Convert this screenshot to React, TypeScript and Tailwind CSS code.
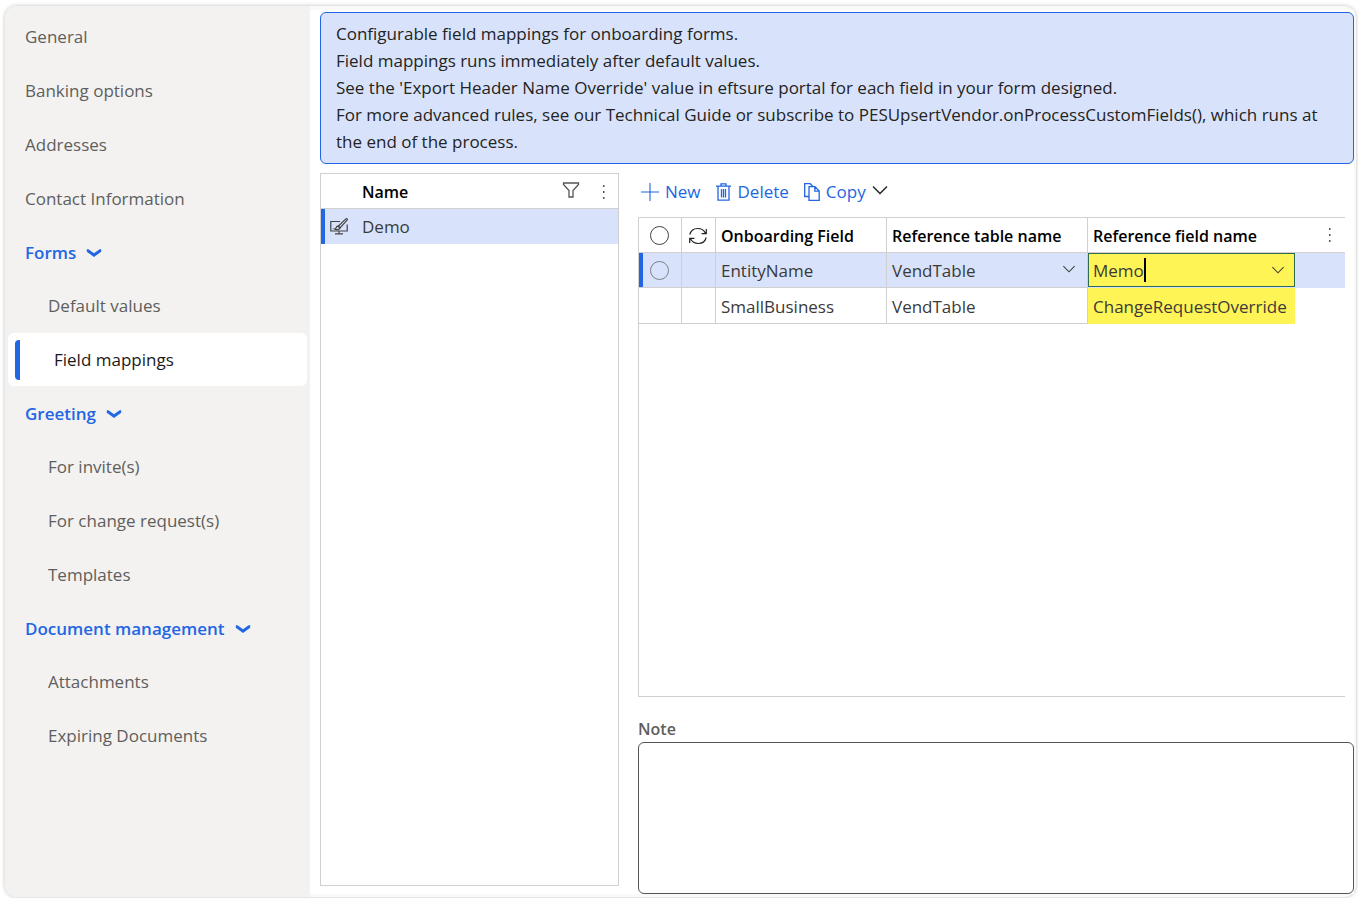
import { useState } from "react";
import clsx from "clsx";

interface NavGroup {
  label: string;
  items?: string[];
}

interface MappingRow {
  field: string;
  table: string;
  reference: string;
}

const NAV: NavGroup[] = [
  { label: "General" },
  { label: "Banking options" },
  { label: "Addresses" },
  { label: "Contact Information" },
  { label: "Forms", items: ["Default values", "Field mappings"] },
  {
    label: "Greeting",
    items: ["For invite(s)", "For change request(s)", "Templates"],
  },
  {
    label: "Document management",
    items: ["Attachments", "Expiring Documents"],
  },
];

const INFO_LINES = [
  "Configurable field mappings for onboarding forms.",
  "Field mappings runs immediately after default values.",
  "See the 'Export Header Name Override' value in eftsure portal for each field in your form designed.",
  "For more advanced rules, see our Technical Guide or subscribe to PESUpsertVendor.onProcessCustomFields(), which runs at the end of the process.",
];

const ROWS: MappingRow[] = [
  { field: "EntityName", table: "VendTable", reference: "Memo" },
  {
    field: "SmallBusiness",
    table: "VendTable",
    reference: "ChangeRequestOverride",
  },
];

function Chevron({ className }: { className?: string }) {
  return (
    <svg viewBox="0 0 16 10" fill="none" stroke="currentColor" className={className}>
      <path d="M1 1.5 8 8.5 15 1.5" />
    </svg>
  );
}

function MoreDots() {
  return (
    <svg viewBox="0 0 4 14" fill="#555" className="h-3.5 w-1">
      <rect x="1" y="0" width="1.5" height="2" />
      <rect x="1" y="6" width="1.5" height="2" />
      <rect x="1" y="12" width="1.5" height="2" />
    </svg>
  );
}

function Sidebar() {
  const [active, setActive] = useState("Field mappings");
  const [closed, setClosed] = useState<string[]>([]);

  const toggle = (label: string) =>
    setClosed((prev) =>
      prev.includes(label) ? prev.filter((l) => l !== label) : [...prev, label]
    );

  const renderLink = (label: string, nested: boolean) => {
    const selected = active === label;
    return (
      <li key={label} className="flex h-[54px] items-start">
        <a
          href="#"
          onClick={(e) => {
            e.preventDefault();
            setActive(label);
          }}
          className={clsx(
            "flex h-[53px] items-center",
            selected
              ? "mx-[3px] grow rounded-md bg-white pl-[7px] text-[#1b1a19]"
              : "text-[#605e5c]",
            !selected && (nested ? "pl-[43px]" : "pl-5")
          )}
        >
          {selected && (
            <span className="mr-[34px] h-10 w-[5px] rounded-l-[4px] bg-[#2266e3]" />
          )}
          {label}
        </a>
      </li>
    );
  };

  return (
    <nav className="w-[305px] shrink-0 rounded-l-xl bg-[#f3f2f1] pt-1">
      <ul>
        {NAV.map((group) =>
          group.items ? (
            <li key={group.label}>
              <button
                type="button"
                onClick={() => toggle(group.label)}
                className="flex h-[54px] items-center gap-2.5 pl-5 font-semibold text-[#2266e3]"
              >
                {group.label}
                <svg viewBox="0 0 16 10" fill="currentColor" className="h-2.5 w-4">
                  <path d="M.8 1.3h1.6L8 5.2l5.6-3.900h1.600v2.400L8 9 .8 3.700z" />
                </svg>
              </button>
              {!closed.includes(group.label) && (
                <ul className="-mt-px">
                  {group.items.map((item) => renderLink(item, true))}
                </ul>
              )}
            </li>
          ) : (
            renderLink(group.label, false)
          )
        )}
      </ul>
    </nav>
  );
}

function InfoBanner() {
  return (
    <div className="rounded-md border border-[#2266e3] bg-[#d8e3fb] px-[15px] pt-[7px] pb-2 leading-[27px] text-[#242322]">
      {INFO_LINES.map((line) => (
        <p key={line}>{line}</p>
      ))}
    </div>
  );
}

function FormList() {
  return (
    <section className="mb-2 w-[299px] shrink-0 border border-[#d0d0d0]">
      <div className="flex h-[35px] items-center border-b border-[#d0d0d0] pt-px pl-[41px] pr-3">
        <span className="grow text-base font-semibold text-black">Name</span>
        <button type="button" aria-label="Filter" className="mr-[22px] pb-1">
          <svg viewBox="0 0 18 16" fill="none" stroke="#555" strokeWidth="1.3" className="h-4 w-[18px]">
            <path d="M1.5 1h15v1.5L11 8.5V15H7V8.5L1.5 2.5z" />
          </svg>
        </button>
        <button type="button" aria-label="More options">
          <MoreDots />
        </button>
      </div>
      <button
        type="button"
        className="flex h-[35px] w-full items-center border-l-4 border-[#2266e3] bg-[#d8e3fb] pl-[5px] text-left text-[#3b3a39]"
      >
        <svg viewBox="0 0 18 17" fill="none" stroke="#444" strokeWidth="1.2" className="mr-3.5 h-[17px] w-[18px]">
          <path d="M10 3.5H.8V13h16.400V6.500" />
          <path d="M9 13v2.600M5 15.800h8" />
          <path d="M8.200 8.200 15.800.9c1-.6 2 .4 1.300 1.300L10 9.800z" />
          <path d="M8.200 8.200c-1.700-.2-2 1.200-2.200 1.900-.2.600-.8.900-1.600.9 1.800 1.100 5.200.8 5.600-1.200z" />
        </svg>
        Demo
      </button>
    </section>
  );
}

function Toolbar() {
  return (
    <div className="mb-[7px] flex h-[37px] items-center gap-[15px] pl-[3px] text-[#2266e3]">
      <button type="button" className="flex items-center gap-1.5">
        <svg viewBox="0 0 18 18" stroke="currentColor" strokeWidth="1.1" className="size-[18px]">
          <path d="M9 0v18M0 9h18" />
        </svg>
        New
      </button>
      <button type="button" className="flex items-center gap-[7px]">
        <svg viewBox="0 0 15 18" fill="none" stroke="currentColor" strokeWidth="1.3" className="h-[18px] w-[15px]">
          <path d="M0 3.200h15M5 3V.8h5V3M2 3.200v14h11v-14M5.500 6v8.500M7.500 6v8.500M9.500 6v8.500" />
        </svg>
        Delete
      </button>
      <button type="button" className="flex items-center gap-1.5">
        <svg viewBox="0 0 16 18" fill="none" stroke="currentColor" strokeWidth="1.3" className="h-[18px] w-4">
          <path d="M5 13.500H.7V.7h5.500L9 3.500" />
          <path d="M5 3.700h6l4.200 4.200v9.400H5zM10.800 4v4.200h4.200" />
        </svg>
        Copy
        <Chevron className="mb-1 h-2.5 w-4 stroke-[1.4] text-[#222]" />
      </button>
    </div>
  );
}

function MappingTable() {
  const [memo, setMemo] = useState(ROWS[0].reference);
  const th = "border-b border-[#d0d0d0] pt-0.5 pl-[5px] text-left text-base font-semibold text-black";
  const line = "border-r border-[#d0d0d0]";
  const circle =
    "block size-[19px] appearance-none rounded-full border checked:bg-[#2266e3]";

  return (
    <div className="mr-[9px] grow border border-r-0 border-[#d0d0d0]">
      <table className="w-full table-fixed border-separate border-spacing-0 text-[#3b3a39]">
        <colgroup>
          <col className="w-[43px]" />
          <col className="w-[34px]" />
          <col className="w-[171px]" />
          <col className="w-[201px]" />
          <col className="w-[207px]" />
          <col />
        </colgroup>
        <thead>
          <tr className="h-[35px]">
            <th className={clsx("border-b pl-[11px]", line)}>
              <input type="checkbox" aria-label="Select all rows" className={clsx(circle, "border-[#444]")} />
            </th>
            <th className={clsx("border-b pt-0.5 pl-[7px]", line)}>
              <button type="button" aria-label="Refresh" className="block">
                <svg viewBox="0 0 18 18" fill="none" stroke="#222" strokeWidth="1.2" className="size-[18px]">
                  <path d="M.8 7.500C1.800 3.800 5 1.500 8.800 1.500c3.300 0 6.200 1.800 7.700 4.700M17.300 2v4.700h-4.700" />
                  <path d="M17.200 10.500c-1 3.700-4.200 6-8 6-3.300 0-6.200-1.800-7.700-4.700M.7 16v-4.700h4.700" />
                </svg>
              </button>
            </th>
            <th className={clsx(th, "border-r")}>Onboarding Field</th>
            <th className={clsx(th, "border-r")}>Reference table name</th>
            <th className={th}>Reference field name</th>
            <th className="border-b border-[#d0d0d0] pl-[33px]">
              <button type="button" aria-label="Column options" className="block">
                <MoreDots />
              </button>
            </th>
          </tr>
        </thead>
        <tbody>
          <tr className="h-[35px] bg-[#d8e3fb]">
            <td className={clsx("border-b pl-[11px] shadow-[inset_4px_0_0_#2266e3]", line)}>
              <input type="checkbox" aria-label="Select EntityName" className={clsx(circle, "border-[#7c7f88]")} />
            </td>
            <td className={clsx("border-b", line)} />
            <td className={clsx("border-b pt-px pl-[5px]", line)}>{ROWS[0].field}</td>
            <td className={clsx("border-b p-0", line)}>
              <div className="relative">
                <select
                  aria-label="Reference table name"
                  className="block h-[34px] w-full appearance-none bg-transparent pt-px pl-[5px] outline-none"
                >
                  <option>{ROWS[0].table}</option>
                </select>
                <Chevron className="pointer-events-none absolute top-3 right-[11px] h-2 w-3.5 stroke-[1.3]" />
              </div>
            </td>
            <td className="p-0 align-top">
              <div className="relative flex h-[34px] items-center border border-[#2f6b4f] bg-[#fff455]">
                <input
                  type="text"
                  aria-label="Reference field name"
                  value={memo}
                  onChange={(e) => setMemo(e.target.value)}
                  className="peer h-full w-0 grow bg-transparent pt-px pl-1 outline-none"
                />
                <span className="absolute top-1 left-[55px] h-6 w-0.5 bg-black peer-focus:hidden" />
                <button type="button" aria-label="Open lookup" className="mr-[9px]">
                  <Chevron className="h-2 w-3.5 stroke-[1.3]" />
                </button>
              </div>
            </td>
            <td />
          </tr>
          {ROWS.slice(1).map((row) => (
            <tr key={row.field} className="h-9">
              <td className={clsx("border-b", line)} />
              <td className={clsx("border-b", line)} />
              <td className={clsx("border-b pt-0.5 pl-[5px]", line)}>{row.field}</td>
              <td className={clsx("border-b pt-0.5 pl-[5px]", line)}>{row.table}</td>
              <td className="bg-[#fff455] pt-px pl-[5px]">{row.reference}</td>
              <td />
            </tr>
          ))}
        </tbody>
      </table>
    </div>
  );
}

export default function App() {
  return (
    <div className="flex min-h-screen bg-white pt-1.5 pr-0.5 pb-px pl-[5px] font-['Open_Sans','Noto_Sans',sans-serif] text-[17px] leading-6">
      <div className="flex grow rounded-xl bg-[#faf9f8] shadow-[0_0_4px_rgba(0,0,0,0.25)]">
        <Sidebar />
        <main className="mt-1 mr-0.5 mb-[3px] flex min-w-0 grow flex-col gap-[9px] bg-white pt-0.5 pl-2.5">
          <InfoBanner />
          <div className="flex grow gap-[19px]">
            <FormList />
            <section className="flex min-w-0 grow flex-col">
              <Toolbar />
              <MappingTable />
              <label htmlFor="note" className="mt-5 h-[25px] text-base font-semibold text-[#605e5c]">
                Note
              </label>
              <textarea
                id="note"
                className="block h-[152px] resize-none rounded-md border border-[#555] bg-white p-2"
              />
            </section>
          </div>
        </main>
      </div>
    </div>
  );
}
